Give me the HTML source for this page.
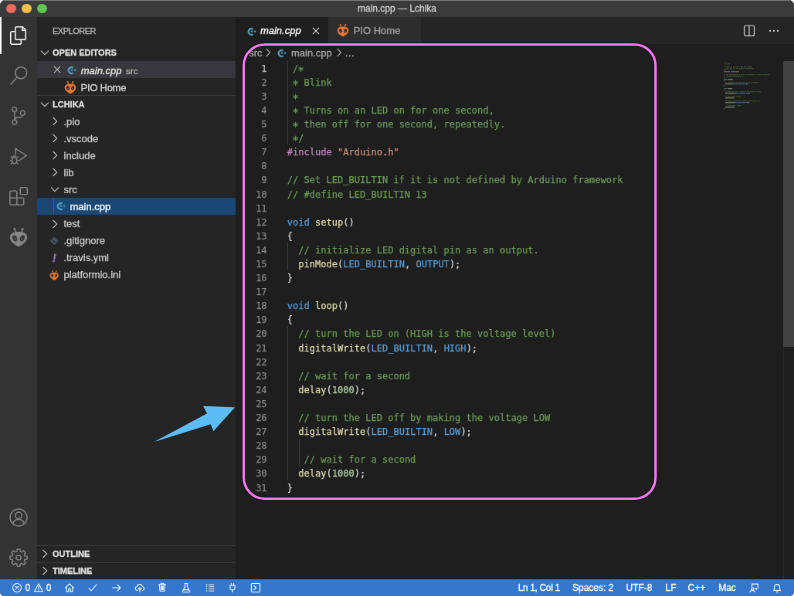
<!DOCTYPE html>
<html lang="en">
<head>
<meta charset="utf-8">
<title>main.cpp — Lchika</title>
<style>
*{box-sizing:border-box;margin:0;padding:0}
html,body{width:794px;height:596px;overflow:hidden;background:#fff}
body{font-family:"Liberation Sans",sans-serif;}
#win{will-change:transform;-webkit-font-smoothing:antialiased;position:absolute;left:0;top:0;width:1028px;height:772px;transform:scale(0.77237);transform-origin:0 0;background:#1e1e1e;border-radius:7px 7px 6px 6px;overflow:hidden;color:#ccc;font-size:13px}
#titlebar{position:absolute;left:0;top:0;width:1028px;height:22px;background:#3b3b3b;border-top:1px solid #7c7c7c;text-align:center;line-height:21px;font-size:12px;color:#d0d0d0}
.tl{position:absolute;top:3.9px;margin-left:0.3px;width:12.4px;height:12.4px;border-radius:50%}
#activity{position:absolute;left:0;top:22px;width:48px;height:728px;background:#333333}
#activity .ind{position:absolute;left:0;top:0;width:2px;height:48px;background:#fff}
#activity svg{position:absolute;overflow:visible}
#sidebar{position:absolute;left:48px;top:22px;width:257px;height:728px;background:#252526}
#sidebar .title{position:absolute;left:20px;top:1px;letter-spacing:-0.5px;height:35px;line-height:35px;font-size:11px;color:#bbbbbb}
.hdr{position:absolute;left:0;width:257px;height:22px;line-height:23.2px;font-size:11px;font-weight:bold;color:#e0e0e0;padding-left:20px}
.row{position:absolute;left:0;width:257px;height:22px;line-height:22px;font-size:13px;color:#cccccc;white-space:nowrap}
.row span.t{position:absolute;top:1.5px}
.tree span.t{top:0.5px}
.tree .ic{margin-top:-1px}
.row,.tab,#crumbs,#status,#titlebar,.title,.hdr{-webkit-text-stroke:0.3px}
.ic{position:absolute}
.chev{position:absolute;width:16px;height:16px;top:3px}
#tabs{position:absolute;left:305px;top:22px;width:723px;height:35px;background:#252526}
.tab{position:absolute;top:0;height:35px;line-height:36px;font-size:13px;white-space:nowrap}
#crumbs{position:absolute;left:305px;top:57px;width:709px;height:22px;line-height:23px;font-size:13px;color:#a9a9a9;white-space:nowrap}
#code{position:absolute;left:305px;top:79px;width:723px;height:671px;font-family:"DejaVu Sans Mono","Liberation Mono",monospace;font-size:12px;line-height:18.1px;color:#d4d4d4}
#code .ln{position:absolute;left:0;top:0.7px;width:40.6px;text-align:right;color:#858585;white-space:pre}
#code pre{position:absolute;left:66.7px;top:0.7px;font:inherit;white-space:pre;letter-spacing:0.022px}
.a{display:inline-block;transform:translateY(2.3px) scale(1.2)}
#code{-webkit-text-stroke:0.25px}
.c{color:#6a9955}.k{color:#569cd6}.f{color:#dcdcaa}.s{color:#ce9178}.p{color:#c586c0}.n{color:#b5cea8}
.g{position:absolute;width:1px;background:#404040}
#status{position:absolute;left:0;top:750px;width:1028px;height:22px;background:#3478ce;color:#fff;font-size:12px;line-height:22px;white-space:nowrap}
#status span{position:absolute;top:0}
#status svg{position:absolute;width:14px;height:14px}
#anno{position:absolute;left:0;top:0;width:794px;height:596px}
</style>
</head>
<body>
<div id="win">
  <div id="titlebar">main.cpp — Lchika
    <div class="tl" style="left:8px;background:#ec6a5e"></div>
    <div class="tl" style="left:28px;background:#f4bf4f"></div>
    <div class="tl" style="left:48px;background:#61c554"></div>
  </div>
  <div id="activity">
    <div class="ind"></div>
    <svg style="top:12.0px;left:12.0px;width:24px;height:24px" viewBox="0 0 24 24" fill="#ffffff"><path d="M17.5 0h-9L7 1.5V6H2.5L1 7.5v15.07L2.5 24h12.07L16 22.57V18h4.7l1.3-1.43V4.5L17.5 0zm0 2.12l2.38 2.38H17.5V2.12zm-3 20.38h-12v-15H7v9.07L8.5 18h6v4.5zm6-6h-12v-15H16V6h4.5v10.5z"/></svg>
    <svg style="top:64.0px;left:12.0px;width:24px;height:24px" viewBox="0 0 24 24" fill="#858585"><path d="M15.25 0a8.25 8.25 0 0 0-6.18 13.72L1 22.88l1.12 1.12 8.05-9.12A8.251 8.251 0 1 0 15.25.01V0zm0 15a6.75 6.75 0 1 1 0-13.5 6.75 6.75 0 0 1 0 13.5z"/></svg>
    <svg style="top:116.0px;left:12.0px;width:24px;height:24px" viewBox="0 0 24 24" fill="#858585"><path d="M21.007 8.222A3.738 3.738 0 0 0 15.045 5.2a3.737 3.737 0 0 0 1.156 6.583 2.988 2.988 0 0 1-2.668 1.67h-2.99a4.456 4.456 0 0 0-2.989 1.165V7.4a3.737 3.737 0 1 0-1.494 0v9.117a3.776 3.776 0 1 0 1.816.099 2.99 2.99 0 0 1 2.668-1.667h2.99a4.484 4.484 0 0 0 4.223-3.039 3.736 3.736 0 0 0 3.25-3.687zM4.565 3.738a2.242 2.242 0 1 1 4.484 0 2.242 2.242 0 0 1-4.484 0zm4.484 16.441a2.242 2.242 0 1 1-4.484 0 2.242 2.242 0 0 1 4.484 0zm8.221-9.715a2.242 2.242 0 1 1 0-4.485 2.242 2.242 0 0 1 0 4.485z"/></svg>
    <svg style="top:168.0px;left:12.0px;width:24px;height:24px" viewBox="0 0 24 24" fill="#858585"><g fill="none" stroke="#858585" stroke-width="1.5"><path d="M8.2 10 V2.3 L22 11.5 L12.500 17.8"/><ellipse cx="6.7" cy="17.6" rx="3.1" ry="4.1"/><path d="M3.6 17.6 H0.8 M9.8 17.6 H12.6 M4 14.6 L1.8 12.6 M9.4 14.6 L11.6 12.6 M4 20.6 L1.8 22.6 M9.4 20.6 L11.6 22.6 M4.6 13.2 a2.2 2.2 0 0 1 4.2 0" stroke-width="1.3"/></g></svg>
    <svg style="top:220.0px;left:12.0px;width:24px;height:24px" viewBox="0 0 24 24" fill="#858585"><path d="M13.5 1.5L15 0h7.5L24 1.5V9l-1.5 1.5H15L13.5 9V1.5zm1.5 0V9h7.5V1.5H15zM0 15V6l1.5-1.5H9L10.5 6v7.5H18l1.5 1.5v7.5L18 24H1.5L0 22.5V15zm9-1.5V6H1.5v7.5H9zM9 15H1.5v7.5H9V15zm1.5 7.5H18V15h-7.5v7.5z"/></svg>
    <svg style="top:273.0px;left:12.0px;width:24px;height:24px" viewBox="0 0 24 24" fill="#858585"><g fill="#858585"><path d="M12 24.6 C8.5 22.4 0.9 19 0.9 12.3 C0.9 7.2 5.5 5 12 5 C18.5 5 23.1 7.2 23.1 12.3 C23.1 19 15.5 22.4 12 24.6Z"/><path d="M8.4 6 L7.100 1.900 M15.6 6 L16.9 1.9" stroke="#858585" stroke-width="1.5" fill="none"/><circle cx="7" cy="1.6" r="1.55"/><circle cx="17" cy="1.6" r="1.55"/></g><ellipse cx="7.2" cy="13.4" rx="2.8" ry="4.1" transform="rotate(-24 7.2 13.4)" fill="#333"/><ellipse cx="16.8" cy="13.4" rx="2.8" ry="4.1" transform="rotate(24 16.8 13.4)" fill="#333"/><circle cx="7.8" cy="14.2" r="0.9" fill="#858585"/><circle cx="16.2" cy="14.2" r="0.9" fill="#858585"/></svg>
    <svg style="top:635.5px;left:12.0px;width:24px;height:24px" viewBox="0 0 24 24" fill="#858585"><g fill="none" stroke="#858585" stroke-width="1.5"><circle cx="12" cy="12" r="11"/><circle cx="12" cy="9.3" r="4.2"/><path d="M4.8 20 C5.6 16.3 8.4 14.6 12 14.600 C15.6 14.6 18.4 16.3 19.2 20"/></g></svg>
    <svg style="top:687.5px;left:12.0px;width:24px;height:24px" viewBox="0 0 24 24" fill="#858585"><g fill="none" stroke="#858585" stroke-width="1.5" stroke-linejoin="round"><path d="M9.84 3.88 L10.11 0.96 L13.89 0.96 L14.16 3.88 L16.21 4.73 L18.47 2.85 L21.15 5.53 L19.27 7.79 L20.12 9.84 L23.04 10.11 L23.04 13.89 L20.12 14.16 L19.27 16.21 L21.15 18.47 L18.47 21.15 L16.21 19.27 L14.16 20.12 L13.89 23.04 L10.11 23.04 L9.84 20.12 L7.79 19.27 L5.53 21.15 L2.85 18.47 L4.73 16.21 L3.88 14.16 L0.96 13.89 L0.96 10.11 L3.88 9.84 L4.73 7.79 L2.85 5.53 L5.53 2.85 L7.79 4.73Z"/><circle cx="12" cy="12" r="3.1"/></g></svg>
  </div>
  <div id="sidebar">
    <div class="title">EXPLORER</div>
    <div class="hdr" style="top:35px"><svg class="ic" style="left:2.00px;top:3.00px;width:16px;height:16px" viewBox="0 0 16 16"><path d="M3 5.6 L8 10.6 L13 5.6" fill="none" stroke="#c5c5c5" stroke-width="1.1"/></svg>OPEN EDITORS</div>
    <div class="row" style="top:57px;background:#37373d"><svg class="ic" style="left:18.30px;top:3.40px;width:16px;height:16px" viewBox="0 0 16 16"><path d="M3.9 3.9 L12.1 12.1 M12.1 3.9 L3.9 12.1" stroke="#c5c5c5" stroke-width="1.1" fill="none"/></svg><svg class="ic" style="left:39.33px;top:4.80px;width:14px;height:14px" viewBox="0 0 14 14" fill="none" stroke="#519aba"><path d="M7.64 3.74 A3.85 3.85 0 1 0 7.64 10.26" stroke-width="2.2"/><path d="M4.5 6.8 H7.5 M6 5.3 V8.3 M8.6 6.8 H11.6 M10.1 5.3 V8.300" stroke-width="1.1"/></svg><span class="t" style="left:56.7px;font-style:italic;color:#e8e8e8">main.cpp</span><span class="t" style="left:115px;font-size:11.7px;color:#b4b4b4">src</span></div>
    <div class="row" style="top:79px"><svg class="ic" style="left:34.83px;top:3.60px;width:16px;height:16px;overflow:visible" viewBox="0 0 20 20"><g fill="#e37933"><path d="M10 20.7 C7 18.6 0.9 15.6 0.9 10.2 C0.9 6.100 5 4.4 10 4.4 C15 4.4 19.1 6.1 19.1 10.2 C19.1 15.6 13 18.6 10 20.7Z"/><path d="M7 5.2 L5.900 1.800 M13 5.2 L14.1 1.8" stroke="#e37933" stroke-width="1.4" fill="none"/><circle cx="5.8" cy="1.5" r="1.35"/><circle cx="14.2" cy="1.5" r="1.35"/></g><ellipse cx="6.1" cy="11" rx="2.3" ry="3.3" transform="rotate(-24 6.1 11)" fill="#252526"/><ellipse cx="13.9" cy="11" rx="2.3" ry="3.3" transform="rotate(24 13.9 11)" fill="#252526"/><circle cx="6.6" cy="11.6" r="0.7" fill="#e37933"/><circle cx="13.4" cy="11.6" r="0.7" fill="#e37933"/></svg><span class="t" style="left:56.5px;letter-spacing:-0.25px;color:#dcdcdc">PIO Home</span></div>
    <div style="position:absolute;left:0;top:101px;width:257px;height:1px;background:#3c3c3c"></div>
    <div class="hdr" style="top:102px"><svg class="ic" style="left:2.00px;top:3.00px;width:16px;height:16px" viewBox="0 0 16 16"><path d="M3 5.6 L8 10.6 L13 5.6" fill="none" stroke="#c5c5c5" stroke-width="1.1"/></svg>LCHIKA</div>
    <div class="row tree" style="top:124.00px"><svg class="ic" style="left:14.70px;top:4.20px;width:16px;height:16px" viewBox="0 0 16 16"><path d="M5.6 3 L10.6 8 L5.6 13" fill="none" stroke="#c5c5c5" stroke-width="1.1"/></svg><span class="t" style="left:34.5px">.pio</span></div>
    <div class="row tree" style="top:146.06px"><svg class="ic" style="left:14.70px;top:4.20px;width:16px;height:16px" viewBox="0 0 16 16"><path d="M5.6 3 L10.6 8 L5.6 13" fill="none" stroke="#c5c5c5" stroke-width="1.1"/></svg><span class="t" style="left:34.5px">.vscode</span></div>
    <div class="row tree" style="top:168.12px"><svg class="ic" style="left:14.70px;top:4.20px;width:16px;height:16px" viewBox="0 0 16 16"><path d="M5.6 3 L10.6 8 L5.6 13" fill="none" stroke="#c5c5c5" stroke-width="1.1"/></svg><span class="t" style="left:34.5px">include</span></div>
    <div class="row tree" style="top:190.18px"><svg class="ic" style="left:14.70px;top:4.20px;width:16px;height:16px" viewBox="0 0 16 16"><path d="M5.6 3 L10.6 8 L5.6 13" fill="none" stroke="#c5c5c5" stroke-width="1.1"/></svg><span class="t" style="left:34.5px">lib</span></div>
    <div class="row tree" style="top:212.24px"><svg class="ic" style="left:14.70px;top:4.20px;width:16px;height:16px" viewBox="0 0 16 16"><path d="M3 5.6 L8 10.6 L13 5.6" fill="none" stroke="#c5c5c5" stroke-width="1.1"/></svg><span class="t" style="left:34.5px">src</span></div>
    <div class="row tree" style="top:234.30px;background:#1a4876;color:#fff"><div style="position:absolute;left:20.5px;top:0;width:1px;height:22px;background:#585858"></div><svg class="ic" style="left:24.50px;top:4.60px;width:14px;height:14px" viewBox="0 0 14 14" fill="none" stroke="#519aba"><path d="M7.64 3.74 A3.85 3.85 0 1 0 7.64 10.26" stroke-width="2.2"/><path d="M4.5 6.8 H7.5 M6 5.3 V8.3 M8.6 6.8 H11.6 M10.1 5.3 V8.300" stroke-width="1.1"/></svg><span class="t" style="left:42.5px">main.cpp</span></div>
    <div class="row tree" style="top:256.36px"><svg class="ic" style="left:14.70px;top:4.20px;width:16px;height:16px" viewBox="0 0 16 16"><path d="M5.6 3 L10.6 8 L5.6 13" fill="none" stroke="#c5c5c5" stroke-width="1.1"/></svg><span class="t" style="left:34.5px">test</span></div>
    <div class="row tree" style="top:278.42px"><svg class="ic" style="left:15px;top:5.3px;width:14px;height:14px" viewBox="0 0 14 14"><path d="M7 1.5 L12.5 7 L7 12.5 L1.5 7Z" fill="#41535b"/><path d="M5.2 5.2 L8.8 8.8 M7 7 L7 9.6" stroke="#252526" stroke-width="0.9"/></svg><span class="t" style="left:34.5px">.gitignore</span></div>
    <div class="row tree" style="top:300.48px"><span class="t" style="left:19.8px;color:#a074c4;font-weight:bold;font-style:italic;font-size:15px">!</span><span class="t" style="left:34.5px">.travis.yml</span></div>
    <div class="row tree" style="top:322.54px"><svg class="ic" style="left:15.95px;top:6.15px;width:12.5px;height:12.5px;overflow:visible" viewBox="0 0 20 20"><g fill="#e37933"><path d="M10 20.7 C7 18.6 0.9 15.6 0.9 10.2 C0.9 6.100 5 4.4 10 4.4 C15 4.4 19.1 6.1 19.1 10.2 C19.1 15.6 13 18.6 10 20.7Z"/><path d="M7 5.2 L5.900 1.800 M13 5.2 L14.1 1.8" stroke="#e37933" stroke-width="1.4" fill="none"/><circle cx="5.8" cy="1.5" r="1.35"/><circle cx="14.2" cy="1.5" r="1.35"/></g><ellipse cx="6.1" cy="11" rx="2.3" ry="3.3" transform="rotate(-24 6.1 11)" fill="#252526"/><ellipse cx="13.9" cy="11" rx="2.3" ry="3.3" transform="rotate(24 13.9 11)" fill="#252526"/><circle cx="6.6" cy="11.6" r="0.7" fill="#e37933"/><circle cx="13.4" cy="11.6" r="0.7" fill="#e37933"/></svg><span class="t" style="left:34.5px">platformio.ini</span></div>
    <div style="position:absolute;left:0;top:684px;width:257px;height:1px;background:#3c3c3c"></div>
    <div class="hdr" style="top:684px"><svg class="ic" style="left:2.00px;top:3.00px;width:16px;height:16px" viewBox="0 0 16 16"><path d="M5.6 3 L10.6 8 L5.6 13" fill="none" stroke="#c5c5c5" stroke-width="1.1"/></svg>OUTLINE</div>
    <div style="position:absolute;left:0;top:706px;width:257px;height:1px;background:#3c3c3c"></div>
    <div class="hdr" style="top:706px"><svg class="ic" style="left:2.00px;top:3.00px;width:16px;height:16px" viewBox="0 0 16 16"><path d="M5.6 3 L10.6 8 L5.6 13" fill="none" stroke="#c5c5c5" stroke-width="1.1"/></svg>TIMELINE</div>
  </div>
  <div id="tabs">
    <div class="tab" style="left:0;width:119.5px;background:#1e1e1e;color:#fff"><svg class="ic" style="left:14.99px;top:11.70px;width:14px;height:14px" viewBox="0 0 14 14" fill="none" stroke="#519aba"><path d="M7.64 3.74 A3.85 3.85 0 1 0 7.64 10.26" stroke-width="2.2"/><path d="M4.5 6.8 H7.5 M6 5.3 V8.3 M8.6 6.8 H11.6 M10.1 5.3 V8.300" stroke-width="1.1"/></svg><span style="position:absolute;left:31.89px;font-style:italic">main.cpp</span><svg class="ic" style="left:95.61px;top:9.50px;width:16px;height:16px" viewBox="0 0 16 16"><path d="M3.9 3.9 L12.1 12.1 M12.1 3.9 L3.9 12.1" stroke="#e0e0e0" stroke-width="1.1" fill="none"/></svg></div>
    <div class="tab" style="left:120px;width:120px;background:#2d2d2d;color:#a2a2a2"><svg class="ic" style="left:10.70px;top:9.20px;width:16px;height:16px;overflow:visible" viewBox="0 0 20 20"><g fill="#e37933"><path d="M10 20.7 C7 18.6 0.9 15.6 0.9 10.2 C0.9 6.100 5 4.4 10 4.4 C15 4.4 19.1 6.1 19.1 10.2 C19.1 15.6 13 18.6 10 20.7Z"/><path d="M7 5.2 L5.900 1.800 M13 5.2 L14.1 1.8" stroke="#e37933" stroke-width="1.4" fill="none"/><circle cx="5.8" cy="1.5" r="1.35"/><circle cx="14.2" cy="1.5" r="1.35"/></g><ellipse cx="6.1" cy="11" rx="2.3" ry="3.3" transform="rotate(-24 6.1 11)" fill="#2d2d2d"/><ellipse cx="13.9" cy="11" rx="2.3" ry="3.3" transform="rotate(24 13.9 11)" fill="#2d2d2d"/><circle cx="6.6" cy="11.6" r="0.7" fill="#e37933"/><circle cx="13.4" cy="11.6" r="0.7" fill="#e37933"/></svg><span style="position:absolute;left:32.68px">PIO Home</span></div>
    <svg class="ic" style="left:657.26px;top:9.36px;width:16px;height:16px" viewBox="0 0 16 16"><rect x="1.5" y="2" width="13" height="13.4" rx="2" fill="none" stroke="#d0d0d0" stroke-width="1.2"/><path d="M8 2 V15.4" fill="none" stroke="#d0d0d0" stroke-width="1.2"/></svg>
    <svg class="ic" style="left:688.98px;top:10.01px;width:16px;height:16px" viewBox="0 0 16 16"><g fill="#d0d0d0"><circle cx="3" cy="8" r="1.15"/><circle cx="8" cy="8" r="1.15"/><circle cx="13" cy="8" r="1.15"/></g></svg>
  </div>
  <div id="crumbs"><span style="position:absolute;left:17.25px">src</span><svg class="ic" style="left:33.73px;top:3.00px;width:16px;height:16px" viewBox="0 0 16 16"><path d="M5.6 3 L10.6 8 L5.6 13" fill="none" stroke="#a9a9a9" stroke-width="1.1"/></svg><svg class="ic" style="left:54.19px;top:4.90px;width:14px;height:14px" viewBox="0 0 14 14" fill="none" stroke="#519aba"><path d="M7.64 3.74 A3.85 3.85 0 1 0 7.64 10.26" stroke-width="2.2"/><path d="M4.5 6.8 H7.5 M6 5.3 V8.3 M8.6 6.8 H11.6 M10.1 5.3 V8.300" stroke-width="1.1"/></svg><span style="position:absolute;left:72.02px">main.cpp</span><svg class="ic" style="left:125.65px;top:3.00px;width:16px;height:16px" viewBox="0 0 16 16"><path d="M5.6 3 L10.6 8 L5.6 13" fill="none" stroke="#a9a9a9" stroke-width="1.1"/></svg><span style="position:absolute;left:141.16px">…</span></div>
  <div id="code">
    <div class="g" style="left:67px;top:0;height:108.6px"></div>
    <div class="g" style="left:67px;top:235.3px;height:36.2px"></div>
    <div class="g" style="left:67px;top:343.9px;height:199.1px"></div>
    <div class="g" style="left:81.5px;top:488.7px;height:36.2px"></div>
    <div class="ln"><span style="color:#b8b8b8">1</span>
2
3
4
5
6
7
8
9
10
11
12
13
14
15
16
17
18
19
20
21
22
23
24
25
26
27
28
29
30
31</div>
    <pre> <span class="c">/<span class="a">*</span></span>
 <span class="c"><span class="a">*</span> Blink</span>
 <span class="c"><span class="a">*</span></span>
 <span class="c"><span class="a">*</span> Turns on an LED on for one second,</span>
 <span class="c"><span class="a">*</span> then off for one second, repeatedly.</span>
 <span class="c"><span class="a">*</span>/</span>
<span class="p">#include</span> <span class="s">"Arduino.h"</span>

<span class="c">// Set LED_BUILTIN if it is not defined by Arduino framework</span>
<span class="c">// #define LED_BUILTIN 13</span>

<span class="k">void</span> <span class="f">setup</span>()
{
  <span class="c">// initialize LED digital pin as an output.</span>
  <span class="f">pinMode</span>(<span class="k">LED_BUILTIN</span>, <span class="k">OUTPUT</span>);
}

<span class="k">void</span> <span class="f">loop</span>()
{
  <span class="c">// turn the LED on (HIGH is the voltage level)</span>
  <span class="f">digitalWrite</span>(<span class="k">LED_BUILTIN</span>, <span class="k">HIGH</span>);

  <span class="c">// wait for a second</span>
  <span class="f">delay</span>(<span class="n">1000</span>);

  <span class="c">// turn the LED off by making the voltage LOW</span>
  <span class="f">digitalWrite</span>(<span class="k">LED_BUILTIN</span>, <span class="k">LOW</span>);

   <span class="c">// wait for a second</span>
  <span class="f">delay</span>(<span class="n">1000</span>);
}</pre>
    <svg style="position:absolute;left:631.60px;top:0.5px;width:90px;height:64px;opacity:0.48" viewBox="0 0 90 64"><rect x="1" y="0" width="2" height="1.4" fill="#6a9955" opacity="0.75"/><rect x="1" y="2" width="1" height="1.4" fill="#6a9955" opacity="0.75"/><rect x="3" y="2" width="5" height="1.4" fill="#6a9955" opacity="0.75"/><rect x="1" y="4" width="1" height="1.4" fill="#6a9955" opacity="0.75"/><rect x="1" y="6" width="1" height="1.4" fill="#6a9955" opacity="0.75"/><rect x="3" y="6" width="5" height="1.4" fill="#6a9955" opacity="0.75"/><rect x="9" y="6" width="2" height="1.4" fill="#6a9955" opacity="0.75"/><rect x="12" y="6" width="2" height="1.4" fill="#6a9955" opacity="0.75"/><rect x="15" y="6" width="3" height="1.4" fill="#6a9955" opacity="0.75"/><rect x="19" y="6" width="2" height="1.4" fill="#6a9955" opacity="0.75"/><rect x="22" y="6" width="3" height="1.4" fill="#6a9955" opacity="0.75"/><rect x="26" y="6" width="3" height="1.4" fill="#6a9955" opacity="0.75"/><rect x="30" y="6" width="7" height="1.4" fill="#6a9955" opacity="0.75"/><rect x="1" y="8" width="1" height="1.4" fill="#6a9955" opacity="0.75"/><rect x="3" y="8" width="4" height="1.4" fill="#6a9955" opacity="0.75"/><rect x="8" y="8" width="3" height="1.4" fill="#6a9955" opacity="0.75"/><rect x="12" y="8" width="3" height="1.4" fill="#6a9955" opacity="0.75"/><rect x="16" y="8" width="3" height="1.4" fill="#6a9955" opacity="0.75"/><rect x="20" y="8" width="7" height="1.4" fill="#6a9955" opacity="0.75"/><rect x="28" y="8" width="11" height="1.4" fill="#6a9955" opacity="0.75"/><rect x="1" y="10" width="2" height="1.4" fill="#6a9955" opacity="0.75"/><rect x="0" y="12" width="8" height="1.4" fill="#c586c0" opacity="1"/><rect x="9" y="12" width="11" height="1.4" fill="#ce9178" opacity="1"/><rect x="0" y="16" width="2" height="1.4" fill="#6a9955" opacity="0.75"/><rect x="3" y="16" width="3" height="1.4" fill="#6a9955" opacity="0.75"/><rect x="7" y="16" width="11" height="1.4" fill="#6a9955" opacity="0.75"/><rect x="19" y="16" width="2" height="1.4" fill="#6a9955" opacity="0.75"/><rect x="22" y="16" width="2" height="1.4" fill="#6a9955" opacity="0.75"/><rect x="25" y="16" width="2" height="1.4" fill="#6a9955" opacity="0.75"/><rect x="28" y="16" width="3" height="1.4" fill="#6a9955" opacity="0.75"/><rect x="32" y="16" width="7" height="1.4" fill="#6a9955" opacity="0.75"/><rect x="40" y="16" width="2" height="1.4" fill="#6a9955" opacity="0.75"/><rect x="43" y="16" width="7" height="1.4" fill="#6a9955" opacity="0.75"/><rect x="51" y="16" width="9" height="1.4" fill="#6a9955" opacity="0.75"/><rect x="0" y="18" width="2" height="1.4" fill="#6a9955" opacity="0.75"/><rect x="3" y="18" width="7" height="1.4" fill="#6a9955" opacity="0.75"/><rect x="11" y="18" width="11" height="1.4" fill="#6a9955" opacity="0.75"/><rect x="23" y="18" width="2" height="1.4" fill="#6a9955" opacity="0.75"/><rect x="0" y="22" width="4" height="1.4" fill="#569cd6" opacity="1"/><rect x="5" y="22" width="5" height="1.4" fill="#dcdcaa" opacity="1"/><rect x="10" y="22" width="2" height="1.4" fill="#d4d4d4" opacity="1"/><rect x="0" y="24" width="1" height="1.4" fill="#d4d4d4" opacity="1"/><rect x="2" y="26" width="2" height="1.4" fill="#6a9955" opacity="0.75"/><rect x="5" y="26" width="10" height="1.4" fill="#6a9955" opacity="0.75"/><rect x="16" y="26" width="3" height="1.4" fill="#6a9955" opacity="0.75"/><rect x="20" y="26" width="7" height="1.4" fill="#6a9955" opacity="0.75"/><rect x="28" y="26" width="3" height="1.4" fill="#6a9955" opacity="0.75"/><rect x="32" y="26" width="2" height="1.4" fill="#6a9955" opacity="0.75"/><rect x="35" y="26" width="2" height="1.4" fill="#6a9955" opacity="0.75"/><rect x="38" y="26" width="7" height="1.4" fill="#6a9955" opacity="0.75"/><rect x="2" y="28" width="7" height="1.4" fill="#dcdcaa" opacity="1"/><rect x="9" y="28" width="1" height="1.4" fill="#d4d4d4" opacity="1"/><rect x="10" y="28" width="11" height="1.4" fill="#569cd6" opacity="1"/><rect x="21" y="28" width="1" height="1.4" fill="#d4d4d4" opacity="1"/><rect x="23" y="28" width="6" height="1.4" fill="#569cd6" opacity="1"/><rect x="29" y="28" width="2" height="1.4" fill="#d4d4d4" opacity="1"/><rect x="0" y="30" width="1" height="1.4" fill="#d4d4d4" opacity="1"/><rect x="0" y="34" width="4" height="1.4" fill="#569cd6" opacity="1"/><rect x="5" y="34" width="4" height="1.4" fill="#dcdcaa" opacity="1"/><rect x="9" y="34" width="2" height="1.4" fill="#d4d4d4" opacity="1"/><rect x="0" y="36" width="1" height="1.4" fill="#d4d4d4" opacity="1"/><rect x="2" y="38" width="2" height="1.4" fill="#6a9955" opacity="0.75"/><rect x="5" y="38" width="4" height="1.4" fill="#6a9955" opacity="0.75"/><rect x="10" y="38" width="3" height="1.4" fill="#6a9955" opacity="0.75"/><rect x="14" y="38" width="3" height="1.4" fill="#6a9955" opacity="0.75"/><rect x="18" y="38" width="2" height="1.4" fill="#6a9955" opacity="0.75"/><rect x="21" y="38" width="5" height="1.4" fill="#6a9955" opacity="0.75"/><rect x="27" y="38" width="2" height="1.4" fill="#6a9955" opacity="0.75"/><rect x="30" y="38" width="3" height="1.4" fill="#6a9955" opacity="0.75"/><rect x="34" y="38" width="7" height="1.4" fill="#6a9955" opacity="0.75"/><rect x="42" y="38" width="6" height="1.4" fill="#6a9955" opacity="0.75"/><rect x="2" y="40" width="12" height="1.4" fill="#dcdcaa" opacity="1"/><rect x="14" y="40" width="1" height="1.4" fill="#d4d4d4" opacity="1"/><rect x="15" y="40" width="11" height="1.4" fill="#569cd6" opacity="1"/><rect x="26" y="40" width="1" height="1.4" fill="#d4d4d4" opacity="1"/><rect x="28" y="40" width="4" height="1.4" fill="#569cd6" opacity="1"/><rect x="32" y="40" width="2" height="1.4" fill="#d4d4d4" opacity="1"/><rect x="2" y="44" width="2" height="1.4" fill="#6a9955" opacity="0.75"/><rect x="5" y="44" width="4" height="1.4" fill="#6a9955" opacity="0.75"/><rect x="10" y="44" width="3" height="1.4" fill="#6a9955" opacity="0.75"/><rect x="14" y="44" width="1" height="1.4" fill="#6a9955" opacity="0.75"/><rect x="16" y="44" width="6" height="1.4" fill="#6a9955" opacity="0.75"/><rect x="2" y="46" width="5" height="1.4" fill="#dcdcaa" opacity="1"/><rect x="7" y="46" width="1" height="1.4" fill="#d4d4d4" opacity="1"/><rect x="8" y="46" width="4" height="1.4" fill="#b5cea8" opacity="1"/><rect x="12" y="46" width="2" height="1.4" fill="#d4d4d4" opacity="1"/><rect x="2" y="50" width="2" height="1.4" fill="#6a9955" opacity="0.75"/><rect x="5" y="50" width="4" height="1.4" fill="#6a9955" opacity="0.75"/><rect x="10" y="50" width="3" height="1.4" fill="#6a9955" opacity="0.75"/><rect x="14" y="50" width="3" height="1.4" fill="#6a9955" opacity="0.75"/><rect x="18" y="50" width="3" height="1.4" fill="#6a9955" opacity="0.75"/><rect x="22" y="50" width="2" height="1.4" fill="#6a9955" opacity="0.75"/><rect x="25" y="50" width="6" height="1.4" fill="#6a9955" opacity="0.75"/><rect x="32" y="50" width="3" height="1.4" fill="#6a9955" opacity="0.75"/><rect x="36" y="50" width="7" height="1.4" fill="#6a9955" opacity="0.75"/><rect x="44" y="50" width="3" height="1.4" fill="#6a9955" opacity="0.75"/><rect x="2" y="52" width="12" height="1.4" fill="#dcdcaa" opacity="1"/><rect x="14" y="52" width="1" height="1.4" fill="#d4d4d4" opacity="1"/><rect x="15" y="52" width="11" height="1.4" fill="#569cd6" opacity="1"/><rect x="26" y="52" width="1" height="1.4" fill="#d4d4d4" opacity="1"/><rect x="28" y="52" width="3" height="1.4" fill="#569cd6" opacity="1"/><rect x="31" y="52" width="2" height="1.4" fill="#d4d4d4" opacity="1"/><rect x="3" y="56" width="2" height="1.4" fill="#6a9955" opacity="0.75"/><rect x="6" y="56" width="4" height="1.4" fill="#6a9955" opacity="0.75"/><rect x="11" y="56" width="3" height="1.4" fill="#6a9955" opacity="0.75"/><rect x="15" y="56" width="1" height="1.4" fill="#6a9955" opacity="0.75"/><rect x="17" y="56" width="6" height="1.4" fill="#6a9955" opacity="0.75"/><rect x="2" y="58" width="5" height="1.4" fill="#dcdcaa" opacity="1"/><rect x="7" y="58" width="1" height="1.4" fill="#d4d4d4" opacity="1"/><rect x="8" y="58" width="4" height="1.4" fill="#b5cea8" opacity="1"/><rect x="12" y="58" width="2" height="1.4" fill="#d4d4d4" opacity="1"/><rect x="0" y="60" width="1" height="1.4" fill="#d4d4d4" opacity="1"/></svg>
    <div style="position:absolute;left:709px;top:0;width:14px;height:370px;background:#424242"></div>
    <div style="position:absolute;left:709px;top:370px;width:1px;height:301px;background:#2b2b2b"></div>
  </div>
  <div id="status"><svg style="left:14.75px;top:3.50px" viewBox="0 0 16 16" fill="none" stroke="#fff" stroke-width="1.25" stroke-linecap="round" stroke-linejoin="round"><circle cx="8" cy="8" r="6.3"/><path d="M5.6 5.6 L10.400 10.4 M10.4 5.6 L5.6 10.4"/></svg><span style="left:32.60px;letter-spacing:0px">0</span><svg style="left:42.85px;top:3.50px" viewBox="0 0 16 16" fill="none" stroke="#fff" stroke-width="1.25" stroke-linecap="round" stroke-linejoin="round"><path d="M8 2 L14.3 13.5 H1.7 Z"/><path d="M8 6.3 V10 M8 11.600 V11.8"/></svg><span style="left:59.80px;letter-spacing:0px">0</span><svg style="left:83.00px;top:3.50px" viewBox="0 0 16 16" fill="none" stroke="#fff" stroke-width="1.25" stroke-linecap="round" stroke-linejoin="round"><path d="M1.8 8.2 L8 2.2 L14.2 8.200 M3.6 7 V13.6 H6.6 V9.6 H9.4 V13.6 H12.4 V7"/></svg><svg style="left:113.10px;top:3.50px" viewBox="0 0 16 16" fill="none" stroke="#fff" stroke-width="1.25" stroke-linecap="round" stroke-linejoin="round"><path d="M2.3 8.6 L6 12.3 L13.6 3.4"/></svg><svg style="left:143.70px;top:3.50px" viewBox="0 0 16 16" fill="none" stroke="#fff" stroke-width="1.25" stroke-linecap="round" stroke-linejoin="round"><path d="M2 8 H13.6 M9.2 3.6 L13.6 8 L9.2 12.4"/></svg><svg style="left:173.50px;top:3.50px" viewBox="0 0 16 16" fill="none" stroke="#fff" stroke-width="1.25" stroke-linecap="round" stroke-linejoin="round"><path d="M4.6 12 H4 A3 3 0 0 1 3.8 6.1 A4.2 4.2 0 0 1 12 6.300 A2.9 2.9 0 0 1 12 12 H11.4"/><path d="M8 14.2 V8 M5.800 10 L8 7.8 L10.2 10"/></svg><svg style="left:203.00px;top:3.00px" viewBox="0 0 16 16" fill="none" stroke="#fff" stroke-width="1.25" stroke-linecap="round" stroke-linejoin="round"><path d="M2.8 4.2 H13.2 M6 4.200 V2.6 H10 V4.2 M4 4.2 L4.600 14 H11.4 L12 4.2 M6.6 6.4 V12 M9.4 6.4 V12 M8 6.400 V12"/></svg><svg style="left:233.60px;top:3.50px" viewBox="0 0 16 16" fill="none" stroke="#fff" stroke-width="1.25" stroke-linecap="round" stroke-linejoin="round"><path d="M5.8 1.8 H10.2 M6.4 1.800 V6.2 L2.6 13.2 Q2.4 14.2 3.4 14.2 H12.6 Q13.6 14.2 13.4 13.2 L9.6 6.2 V1.8 M4.200 11 H11.8"/></svg><svg style="left:264.50px;top:3.50px" viewBox="0 0 16 16" fill="none" stroke="#fff" stroke-width="1.25" stroke-linecap="round" stroke-linejoin="round"><path d="M6 3.4 H14 M6 6.5 H14 M6 9.6 H14 M6 12.700 H14" stroke-width="1.05" stroke-linecap="butt"/><path d="M2.2 3.4 H3.6 M2.2 6.5 H3.6 M2.2 9.6 H3.600 M2.2 12.7 H3.6" stroke-width="1.5" stroke-linecap="butt"/></svg><svg style="left:293.90px;top:3.50px" viewBox="0 0 16 16" fill="none" stroke="#fff" stroke-width="1.25" stroke-linecap="round" stroke-linejoin="round"><path d="M6.2 1.600 V4.4 M9.8 1.6 V4.4 M4.4 4.6 H11.6 V7.6 A3.6 3.6 0 0 1 4.4 7.6 Z M8 11.200 V14.6" stroke-width="1.2"/></svg><svg style="left:324.10px;top:3.50px" viewBox="0 0 16 16" fill="none" stroke="#fff" stroke-width="1.25" stroke-linecap="round" stroke-linejoin="round"><rect x="1.6" y="1.8" width="12.8" height="12.4" rx="1.2"/><path d="M5.4 5 L8.6 8 L5.400 11"/></svg><span style="left:670.70px;letter-spacing:-0.36px">Ln 1, Col 1</span><span style="left:741.00px;letter-spacing:0px">Spaces: 2</span><span style="left:810.40px;letter-spacing:0px">UTF-8</span><span style="left:861.50px;letter-spacing:0px">LF</span><span style="left:890.50px;letter-spacing:0px">C++</span><span style="left:930.20px;letter-spacing:0px">Mac</span><svg style="left:969.20px;top:3.50px" viewBox="0 0 16 16" fill="none" stroke="#fff" stroke-width="1.25" stroke-linecap="round" stroke-linejoin="round"><path d="M5.2 6.6 V2.400 H14 V8.6 H12 V10.6 L10 8.6 H9.6"/><circle cx="6" cy="9.6" r="1.9"/><path d="M2.2 14.6 C2.4 12.6 4 12 6 12 C8 12 9.600 12.6 9.8 14.6"/></svg><svg style="left:999.00px;top:3.50px" viewBox="0 0 16 16" fill="none" stroke="#fff" stroke-width="1.25" stroke-linecap="round" stroke-linejoin="round"><path d="M3 12 H13 L12 10.4 V7 A4 4 0 0 0 4 7 V10.400 Z M6.8 13.8 A1.3 1.3 0 0 0 9.2 13.8"/></svg></div>
</div>
<svg id="anno" viewBox="0 0 794 596">
  <rect x="243.8" y="44.4" width="411.7" height="454.3" rx="21" ry="21" fill="none" stroke="#000" stroke-opacity="0.3" stroke-width="4.4"/>
  <rect x="243.8" y="44.4" width="411.7" height="454.3" rx="21" ry="21" fill="none" stroke="#f377f3" stroke-width="2.5"/>
  <polygon points="153.8,441.9 207,413.6 203.2,406.1 235,407.2 213.4,431.3 210.7,424.2" fill="#5bbcf6"/>
</svg>
</body>
</html>
